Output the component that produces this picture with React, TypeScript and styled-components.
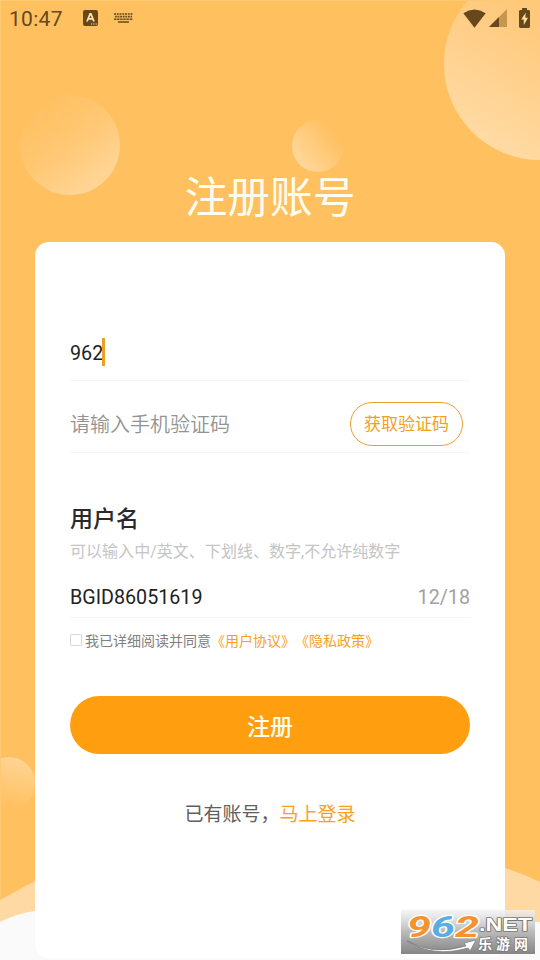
import React from "react";
import styled, { createGlobalStyle } from "styled-components";

const Global = createGlobalStyle`
  * { box-sizing: border-box; }
  body { margin: 0; }
`;

const cjk = `Roboto, "Noto Sans CJK SC", sans-serif`;

const Screen = styled.div`
  position: relative;
  width: 540px;
  height: 960px;
  overflow: hidden;
  background: #ffc060;
  font-family: ${cjk};
  display: flex;
  flex-direction: column;
`;

const Backdrop = styled.svg`
  position: absolute;
  inset: 0;
`;

const StatusBar = styled.header`
  position: relative;
  height: 36px;
  flex: none;
  display: flex;
  align-items: center;
  padding: 0 10px 0 9px;
  color: #66481c;
`;

const Clock = styled.span`
  font-size: 21px;
  font-weight: 400;
  line-height: 36px;
  letter-spacing: 0.3px;
  width: 74px;
  padding-top: 1px;
`;

const StatusIcon = styled.svg<{ $gap?: number }>`
  flex: none;
  margin-right: ${(p) => p.$gap ?? 0}px;
`;

const Spacer = styled.div`
  flex: 1;
`;

const Title = styled.h1`
  position: relative;
  flex: none;
  margin: 129px 0 0;
  height: 77px;
  font-size: 42.7px;
  line-height: 66px;
  font-weight: 400;
  text-align: center;
  color: #fffdf0;
`;

const Card = styled.main`
  position: relative;
  flex: none;
  height: 716px;
  margin: 0 35px;
  padding: 82px 35px 0;
  border-radius: 14px;
  background: #fff;
  display: flex;
  flex-direction: column;
`;

const Field = styled.div<{ $height: number; $top?: number }>`
  flex: none;
  display: flex;
  align-items: center;
  height: ${(p) => p.$height}px;
  padding-top: ${(p) => p.$top ?? 0}px;
  border-bottom: 1px solid #f6f6f6;
  font-size: 19.7px;
  color: #222;
`;

const Caret = styled.span`
  width: 3px;
  height: 28px;
  margin: -2px 0 0 -1px;
  background: #f0a020;
`;

const Placeholder = styled.span`
  flex: 1;
  margin-top: -1px;
  font-size: 20px;
  font-weight: 350;
  color: #939393;
`;

const CodeButton = styled.button`
  width: 113px;
  height: 44px;
  margin-right: 7px;
  padding: 0 0 3px;
  border: 1px solid #e9a130;
  border-radius: 22px;
  background: #fff;
  color: #f2a024;
  font: 400 17px ${cjk};
`;

const SectionTitle = styled.h2`
  margin: 50px 0 0;
  font-size: 23px;
  line-height: 34px;
  font-weight: 500;
  color: #2a2a2a;
`;

const Hint = styled.p`
  margin: 3px 0 0;
  height: 37px;
  font-size: 16.05px;
  line-height: 24px;
  font-weight: 400;
  color: #c4c4c4;
  white-space: nowrap;
`;

const Counter = styled.span`
  margin-left: auto;
  color: #a2a2a2;
`;

const Agreement = styled.label`
  display: flex;
  align-items: center;
  height: 44px;
  font-size: 14px;
  color: #808080;
  white-space: nowrap;
`;

const Checkbox = styled.span`
  width: 12px;
  height: 12px;
  margin: -1px 3px 0 0;
  border: 1px solid #d9d9d9;
  border-radius: 1px;
`;

const Link = styled.span`
  color: #f9a01e;
`;

const SubmitButton = styled.button`
  flex: none;
  height: 58px;
  margin-top: 34px;
  padding: 0;
  border: 0;
  border-radius: 29px;
  background: #ff9f10;
  color: #fffdf2;
  font: 500 23px ${cjk};
`;

const LoginPrompt = styled.p`
  margin: 47px 0 0;
  font-size: 19px;
  line-height: 28px;
  text-align: center;
  color: #606060;
`;

const Watermark = styled.svg`
  position: absolute;
  left: 401px;
  top: 910px;
`;

function BackdropArt() {
  return (
    <Backdrop width="540" height="960" viewBox="0 0 540 960">
      <defs>
        <linearGradient id="big" x1="0.15" y1="0.9" x2="0.5" y2="0.3">
          <stop offset="0" stopColor="#ffdba5" />
          <stop offset="1" stopColor="#ffc97c" />
        </linearGradient>
        <linearGradient id="left" x1="0.8" y1="0.9" x2="0.2" y2="0.1">
          <stop offset="0" stopColor="#ffd698" />
          <stop offset="0.5" stopColor="#ffc875" />
          <stop offset="1" stopColor="#ffc060" />
        </linearGradient>
        <linearGradient id="small" x1="0.15" y1="0.85" x2="0.85" y2="0.3">
          <stop offset="0" stopColor="#ffd79b" />
          <stop offset="1" stopColor="#ffc060" />
        </linearGradient>
        <linearGradient id="low" x1="0.8" y1="0.1" x2="0.6" y2="1">
          <stop offset="0" stopColor="#ffd391" />
          <stop offset="1" stopColor="#ffc060" />
        </linearGradient>
      </defs>
      <circle cx="540" cy="64" r="96" fill="url(#big)" />
      <circle cx="70" cy="145" r="50" fill="url(#left)" />
      <circle cx="318" cy="146" r="26" fill="url(#small)" />
      <circle cx="9" cy="783" r="26" fill="url(#low)" />
      <path d="M0 900Q18 890 35 881L505 868Q524 874 540 882V960H0Z" fill="#ffd9a3" />
      <path d="M0 922Q15 914 35 911L505 922H540V960H0Z" fill="#fafafa" />
      <path d="M0 0H540V1H1V898H0Z" fill="#ffc873" />
    </Backdrop>
  );
}

function StatusIcons() {
  return (
    <>
      <StatusIcon $gap={16} width="15" height="16" viewBox="0 0 15 16">
        <rect width="15" height="16" rx="2" fill="#66481c" />
        <path d="M4 11.5L7.1 4H7.9L11 11.5M5.2 8.9H9.8" fill="none" stroke="#ffe0a8" strokeWidth="1.8" />
        <path d="M8 14H9.3M10.3 14H11.6M12.6 14H13.8" stroke="#ffe0a8" strokeWidth="1.2" />
      </StatusIcon>
      <StatusIcon width="19" height="10" viewBox="0 0 19 10">
        <g fill="none" stroke="#66481c">
          <path d="M0 1H19" strokeWidth="1.7" strokeDasharray="2 .75" />
          <path d="M1 3.7H18" strokeWidth="1.7" strokeDasharray="1.8 .8" />
          <path d="M0 6.3H19" strokeWidth="1.6" strokeDasharray="2.4 .7" />
          <path d="M4 9H15" strokeWidth="1.5" />
        </g>
      </StatusIcon>
      <Spacer />
      <StatusIcon $gap={3} width="23" height="19" viewBox="0 0 23 19">
        <path d="M.3 4.2Q11.5-3.2 22.7 4.2L11.5 18.8Z" fill="#66481c" />
      </StatusIcon>
      <StatusIcon $gap={12} width="18" height="18" viewBox="0 0 18 18">
        <path d="M0 18L18 0V18Z" fill="#c8954d" />
        <path d="M0 18L10 8V18Z" fill="#66481c" />
      </StatusIcon>
      <StatusIcon width="11" height="20" viewBox="0 0 11 20">
        <path d="M3 0H8V2H10L11 3V19L10 20H1L0 19V3L1 2H3Z" fill="#66481c" />
        <path d="M6.6 4.7L2.2 11.5H4.8V17L9 9.8H6.4Z" fill="#ffdda0" />
      </StatusIcon>
    </>
  );
}

function SiteMark() {
  return (
    <Watermark width="134" height="44" viewBox="0 0 134 44">
      <defs>
        <linearGradient id="plate" x1="0" y1="0" x2="0" y2="1">
          <stop offset="0" stopColor="#f2f2f2" stopOpacity="0.75" />
          <stop offset="0.5" stopColor="#b9b9b9" />
          <stop offset="1" stopColor="#858585" />
        </linearGradient>
      </defs>
      <rect width="134" height="44" fill="url(#plate)" />
      <g
        fontFamily="Roboto, sans-serif"
        fontWeight="700"
        fontStyle="italic"
        fontSize="30"
        stroke="#fff"
        strokeWidth="2.4"
        paintOrder="stroke"
        strokeLinejoin="round"
      >
        <text x="6" y="27" textLength="24" lengthAdjust="spacingAndGlyphs" fill="#f5932e">9</text>
        <text x="30" y="27" textLength="24" lengthAdjust="spacingAndGlyphs" fill="#5aade4">6</text>
        <text x="54" y="27" textLength="24" lengthAdjust="spacingAndGlyphs" fill="#f5932e">2</text>
      </g>
      <path
        d="M6 31Q32 46 65 36L63 33L75 30L69 41L67 38Q32 48 6 31Z"
        fill="#fff"
        stroke="#777"
        strokeWidth="0.7"
      />
      <g fill="#fff" stroke="#777" strokeWidth="1.6" paintOrder="stroke" strokeLinejoin="round">
        <text
          x="78"
          y="21"
          fontFamily="Liberation Sans, sans-serif"
          fontWeight="700"
          fontSize="17.5"
          textLength="53"
          lengthAdjust="spacingAndGlyphs"
        >
          .NET
        </text>
        <text
          x="77"
          y="39"
          fontFamily="Noto Sans CJK SC, sans-serif"
          fontWeight="700"
          fontSize="14"
          textLength="50"
        >
          乐游网
        </text>
      </g>
    </Watermark>
  );
}

export default function App() {
  return (
    <>
      <Global />
      <Screen lang="zh-CN">
        <BackdropArt />
        <StatusBar>
          <Clock>10:47</Clock>
          <StatusIcons />
        </StatusBar>
        <Title>注册账号</Title>
        <Card>
          <Field $height={57} $top={2}>
            962
            <Caret />
          </Field>
          <Field $height={72} $top={15}>
            <Placeholder>请输入手机验证码</Placeholder>
            <CodeButton>获取验证码</CodeButton>
          </Field>
          <SectionTitle>用户名</SectionTitle>
          <Hint>可以输入中/英文、下划线、数字,不允许纯数字</Hint>
          <Field $height={41}>
            BGID86051619
            <Counter>12/18</Counter>
          </Field>
          <Agreement>
            <Checkbox />
            我已详细阅读并同意
            <Link>《用户协议》</Link>
            <Link>《隐私政策》</Link>
          </Agreement>
          <SubmitButton>注册</SubmitButton>
          <LoginPrompt>
            已有账号，<Link>马上登录</Link>
          </LoginPrompt>
        </Card>
        <SiteMark />
      </Screen>
    </>
  );
}
